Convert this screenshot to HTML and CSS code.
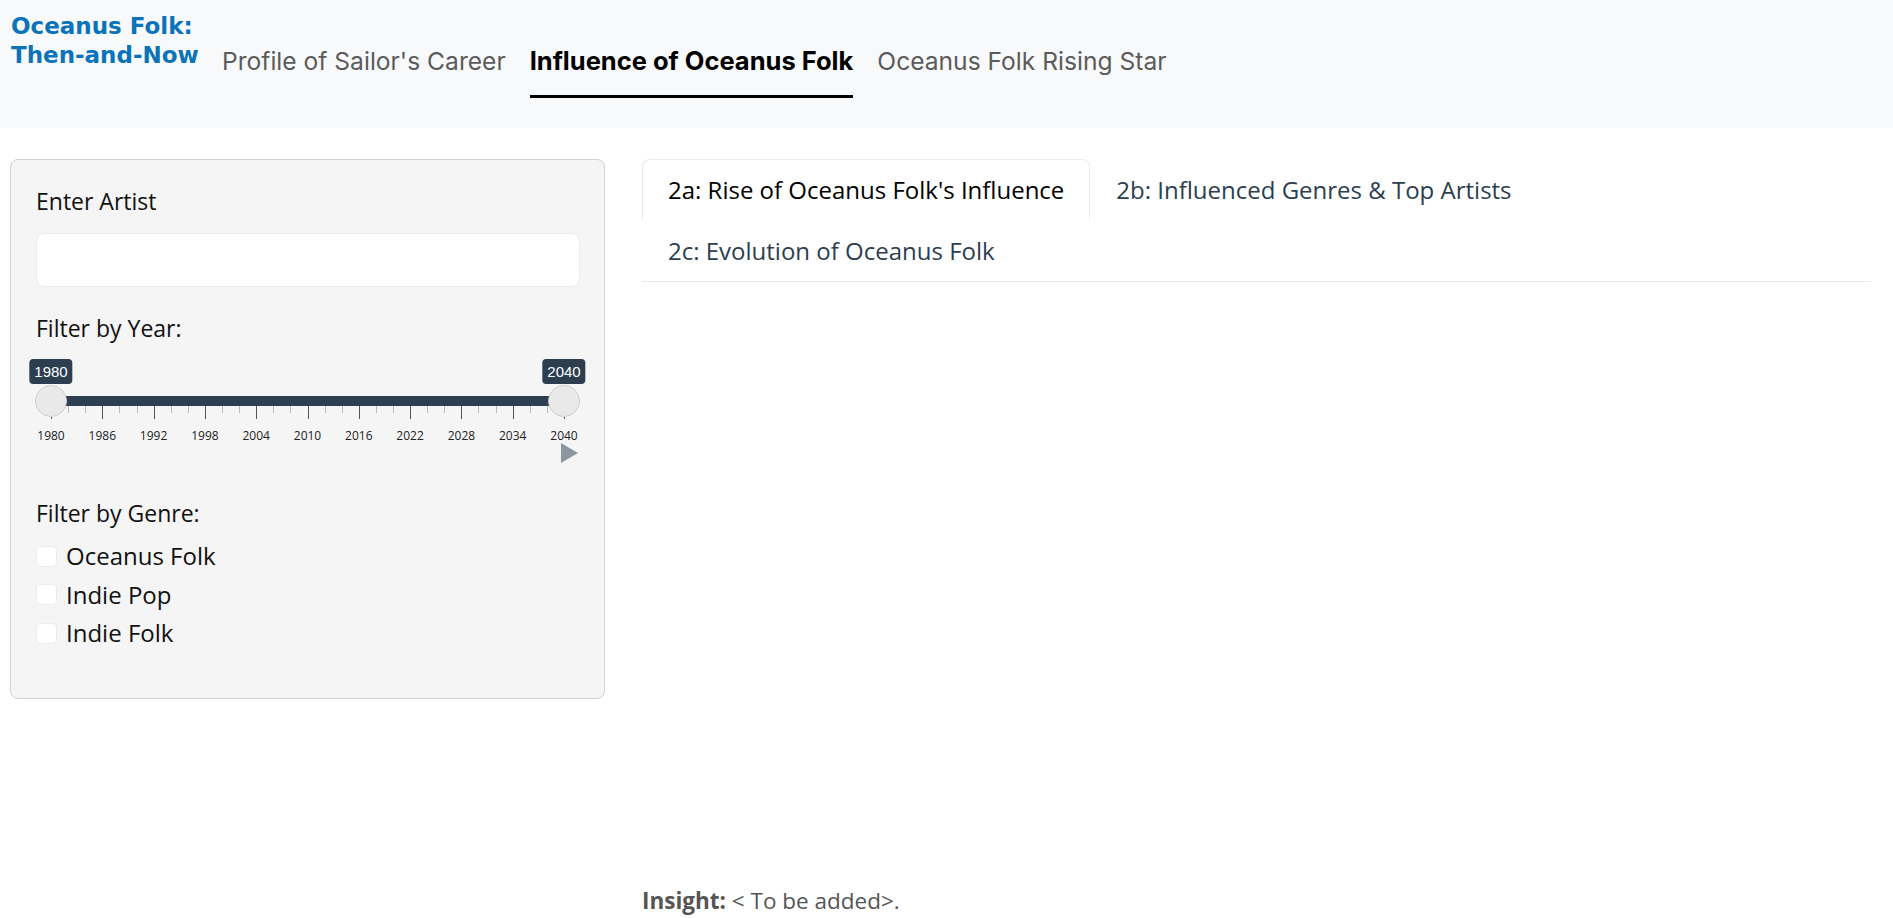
FILE: index.html
```html
<!DOCTYPE html>
<html lang="en">
<head>
<meta charset="utf-8">
<title>Oceanus Folk: Then-and-Now</title>
<link rel="stylesheet" href="styles.css">
</head>
<body>
<header class="topbar">
  <div class="brand">Oceanus Folk:<br>Then-and-Now</div>
  <nav class="mainnav">
    <a class="navlink">Profile of Sailor's Career</a>
    <a class="navlink active">Influence of Oceanus Folk</a>
    <a class="navlink">Oceanus Folk Rising Star</a>
  </nav>
</header>

<div class="layout">
  <aside class="sidebar">
    <div class="field">
      <label class="flabel">Enter Artist</label>
      <input class="textin" type="text">
    </div>

    <div class="field">
      <label class="flabel">Filter by Year:</label>
      <div class="slider">
        <div class="irs">
          <div class="bar"></div>
          <span class="tick major" style="left:0%"></span>
          <span class="tick minor" style="left:3.333%"></span>
          <span class="tick minor" style="left:6.667%"></span>
          <span class="tick major" style="left:10%"></span>
          <span class="tick minor" style="left:13.333%"></span>
          <span class="tick minor" style="left:16.667%"></span>
          <span class="tick major" style="left:20%"></span>
          <span class="tick minor" style="left:23.333%"></span>
          <span class="tick minor" style="left:26.667%"></span>
          <span class="tick major" style="left:30%"></span>
          <span class="tick minor" style="left:33.333%"></span>
          <span class="tick minor" style="left:36.667%"></span>
          <span class="tick major" style="left:40%"></span>
          <span class="tick minor" style="left:43.333%"></span>
          <span class="tick minor" style="left:46.667%"></span>
          <span class="tick major" style="left:50%"></span>
          <span class="tick minor" style="left:53.333%"></span>
          <span class="tick minor" style="left:56.667%"></span>
          <span class="tick major" style="left:60%"></span>
          <span class="tick minor" style="left:63.333%"></span>
          <span class="tick minor" style="left:66.667%"></span>
          <span class="tick major" style="left:70%"></span>
          <span class="tick minor" style="left:73.333%"></span>
          <span class="tick minor" style="left:76.667%"></span>
          <span class="tick major" style="left:80%"></span>
          <span class="tick minor" style="left:83.333%"></span>
          <span class="tick minor" style="left:86.667%"></span>
          <span class="tick major" style="left:90%"></span>
          <span class="tick minor" style="left:93.333%"></span>
          <span class="tick minor" style="left:96.667%"></span>
          <span class="tick major" style="left:100%"></span>

          <span class="glabel" style="left:0%">1980</span>
          <span class="glabel" style="left:10%">1986</span>
          <span class="glabel" style="left:20%">1992</span>
          <span class="glabel" style="left:30%">1998</span>
          <span class="glabel" style="left:40%">2004</span>
          <span class="glabel" style="left:50%">2010</span>
          <span class="glabel" style="left:60%">2016</span>
          <span class="glabel" style="left:70%">2022</span>
          <span class="glabel" style="left:80%">2028</span>
          <span class="glabel" style="left:90%">2034</span>
          <span class="glabel" style="left:100%">2040</span>

          <span class="handle" style="left:0%"></span>
          <span class="handle" style="left:100%"></span>
          <span class="tip" style="left:0%">1980</span>
          <span class="tip" style="left:100%">2040</span>
        </div>
        <div class="playrow">
          <svg class="play" width="17" height="20" viewBox="0 0 17 20"><polygon points="0,0 17,10 0,20" fill="#8e97a1"/></svg>
        </div>
      </div>
    </div>

    <div class="field genre">
      <label class="flabel">Filter by Genre:</label>
      <div class="checks">
        <label class="check"><span class="box"></span>Oceanus Folk</label>
        <label class="check"><span class="box"></span>Indie Pop</label>
        <label class="check"><span class="box"></span>Indie Folk</label>
      </div>
    </div>
  </aside>

  <main class="content">
    <ul class="tabs">
      <li class="tab active">2a: Rise of Oceanus Folk's Influence</li>
      <li class="tab">2b: Influenced Genres &amp; Top Artists</li>
      <li class="tab">2c: Evolution of Oceanus Folk</li>
    </ul>
    <div class="plotarea"></div>
    <p class="insight"><strong>Insight:</strong> &lt; To be added&gt;.</p>
  </main>
</div>
</body>
</html>
```

FILE: styles.css
```css
* { box-sizing: border-box; }

html, body {
  margin: 0;
  padding: 0;
  background: #ffffff;
  font-family: "Open Sans", Lato, sans-serif;
  color: #111;
}

/* ---------- header ---------- */
.topbar {
  height: 128px;
  background: #f8f9fa;
  display: flex;
  align-items: flex-start;
  padding-left: 11px;
}

.brand {
  flex: 0 0 199px;
  font-family: "DejaVu Sans", Inter, sans-serif;
  font-weight: 700;
  font-size: 23px;
  line-height: 29px;
  color: #0a73b9;
  margin-top: 12px;
  white-space: nowrap;
}

.mainnav {
  display: flex;
  margin-top: 45px;
}

.navlink {
  display: block;
  font-family: Inter, "Open Sans", sans-serif;
  font-size: 24.6px;
  line-height: 32px;
  color: #5b5b5b;
  padding: 0 12px 18px;
  border-bottom: 3px solid transparent;
  white-space: nowrap;
}

.navlink.active {
  color: #000;
  font-weight: 700;
  font-size: 25.5px;
  border-bottom-color: #000;
  padding: 0 0 18px;
  margin: 0 12px;
}

/* ---------- layout ---------- */
.layout {
  display: grid;
  grid-template-columns: 595px 1fr;
  column-gap: 37px;
  padding: 31px 22px 0 10px;
}

.sidebar {
  background: #f5f5f5;
  border: 1px solid #d2d2d2;
  border-radius: 8px;
  padding: 25px 24px 0 25px;
  height: 540px;
}

.field { margin-bottom: 25px; }

.flabel {
  display: block;
  font-size: 23px;
  line-height: 32px;
  color: #111;
  margin-bottom: 16px;
}

.textin {
  display: block;
  width: 100%;
  height: 54px;
  border: 1px solid #ebebeb;
  border-radius: 8px;
  background: #fff;
  outline: none;
  font: inherit;
}

/* ---------- slider ---------- */
.slider {
  position: relative;
  height: 106px;
  margin-top: -1px;
}

.irs {
  position: relative;
  margin: 0 16px 0 15px;
  height: 84px;
}

.bar {
  position: absolute;
  left: 0;
  right: 0;
  top: 37px;
  height: 10px;
  background: #2c3e50;
}

.tick {
  position: absolute;
  width: 1px;
  top: 47px;
}
.tick.major { height: 13px; background: #555; }
.tick.minor { height: 7px; background: #bbb; }

.glabel {
  position: absolute;
  top: 69px;
  transform: translateX(-50%);
  font-family: "Open Sans", Lato, sans-serif;
  font-size: 12px;
  line-height: 16px;
  color: #222;
}

.handle {
  position: absolute;
  top: 26px;
  width: 32px;
  height: 32px;
  margin-left: -16px;
  border-radius: 50%;
  background: #e9e9e9;
  border: 1px solid #cfcfcf;
}

.tip {
  position: absolute;
  top: 0;
  height: 25px;
  transform: translateX(-50%);
  background: #2c3e50;
  color: #fff;
  border-radius: 4px;
  padding: 0 5px;
  font-family: "Liberation Sans", Arial, sans-serif;
  font-size: 15px;
  line-height: 25px;
}

.playrow {
  display: flex;
  justify-content: flex-end;
  padding-right: 2px;
}

.play { display: block; }

/* ---------- genre ---------- */
.genre { margin-top: 32px; }
.genre .flabel { margin-bottom: 8px; }

.checks { display: flex; flex-direction: column; }

.check {
  display: flex;
  align-items: center;
  font-size: 24px;
  line-height: 38.5px;
  color: #111;
}

.box {
  width: 21px;
  height: 21px;
  background: #fff;
  border: 1px solid #ececec;
  border-radius: 4px;
  margin-right: 9px;
}

/* ---------- content ---------- */
.content {
  display: flex;
  flex-direction: column;
}

.tabs {
  list-style: none;
  margin: 0;
  padding: 0;
  display: flex;
  flex-wrap: wrap;
  border-bottom: 1px solid #e9ecef;
}

.tab {
  font-size: 24px;
  line-height: 32px;
  color: #2c3e50;
  padding: 14px 25px 13px 25px;
  border: 1px solid transparent;
  border-radius: 8px 8px 0 0;
  white-space: nowrap;
}

.tab.active {
  color: #000;
  border-color: #e9ecef #e9ecef transparent;
  background: #fff;
}

.plotarea { height: 603px; }

.insight {
  margin: 0;
  font-size: 22.5px;
  line-height: 32px;
  color: #555;
}
.insight strong { font-weight: 700; color: #555; }
```
